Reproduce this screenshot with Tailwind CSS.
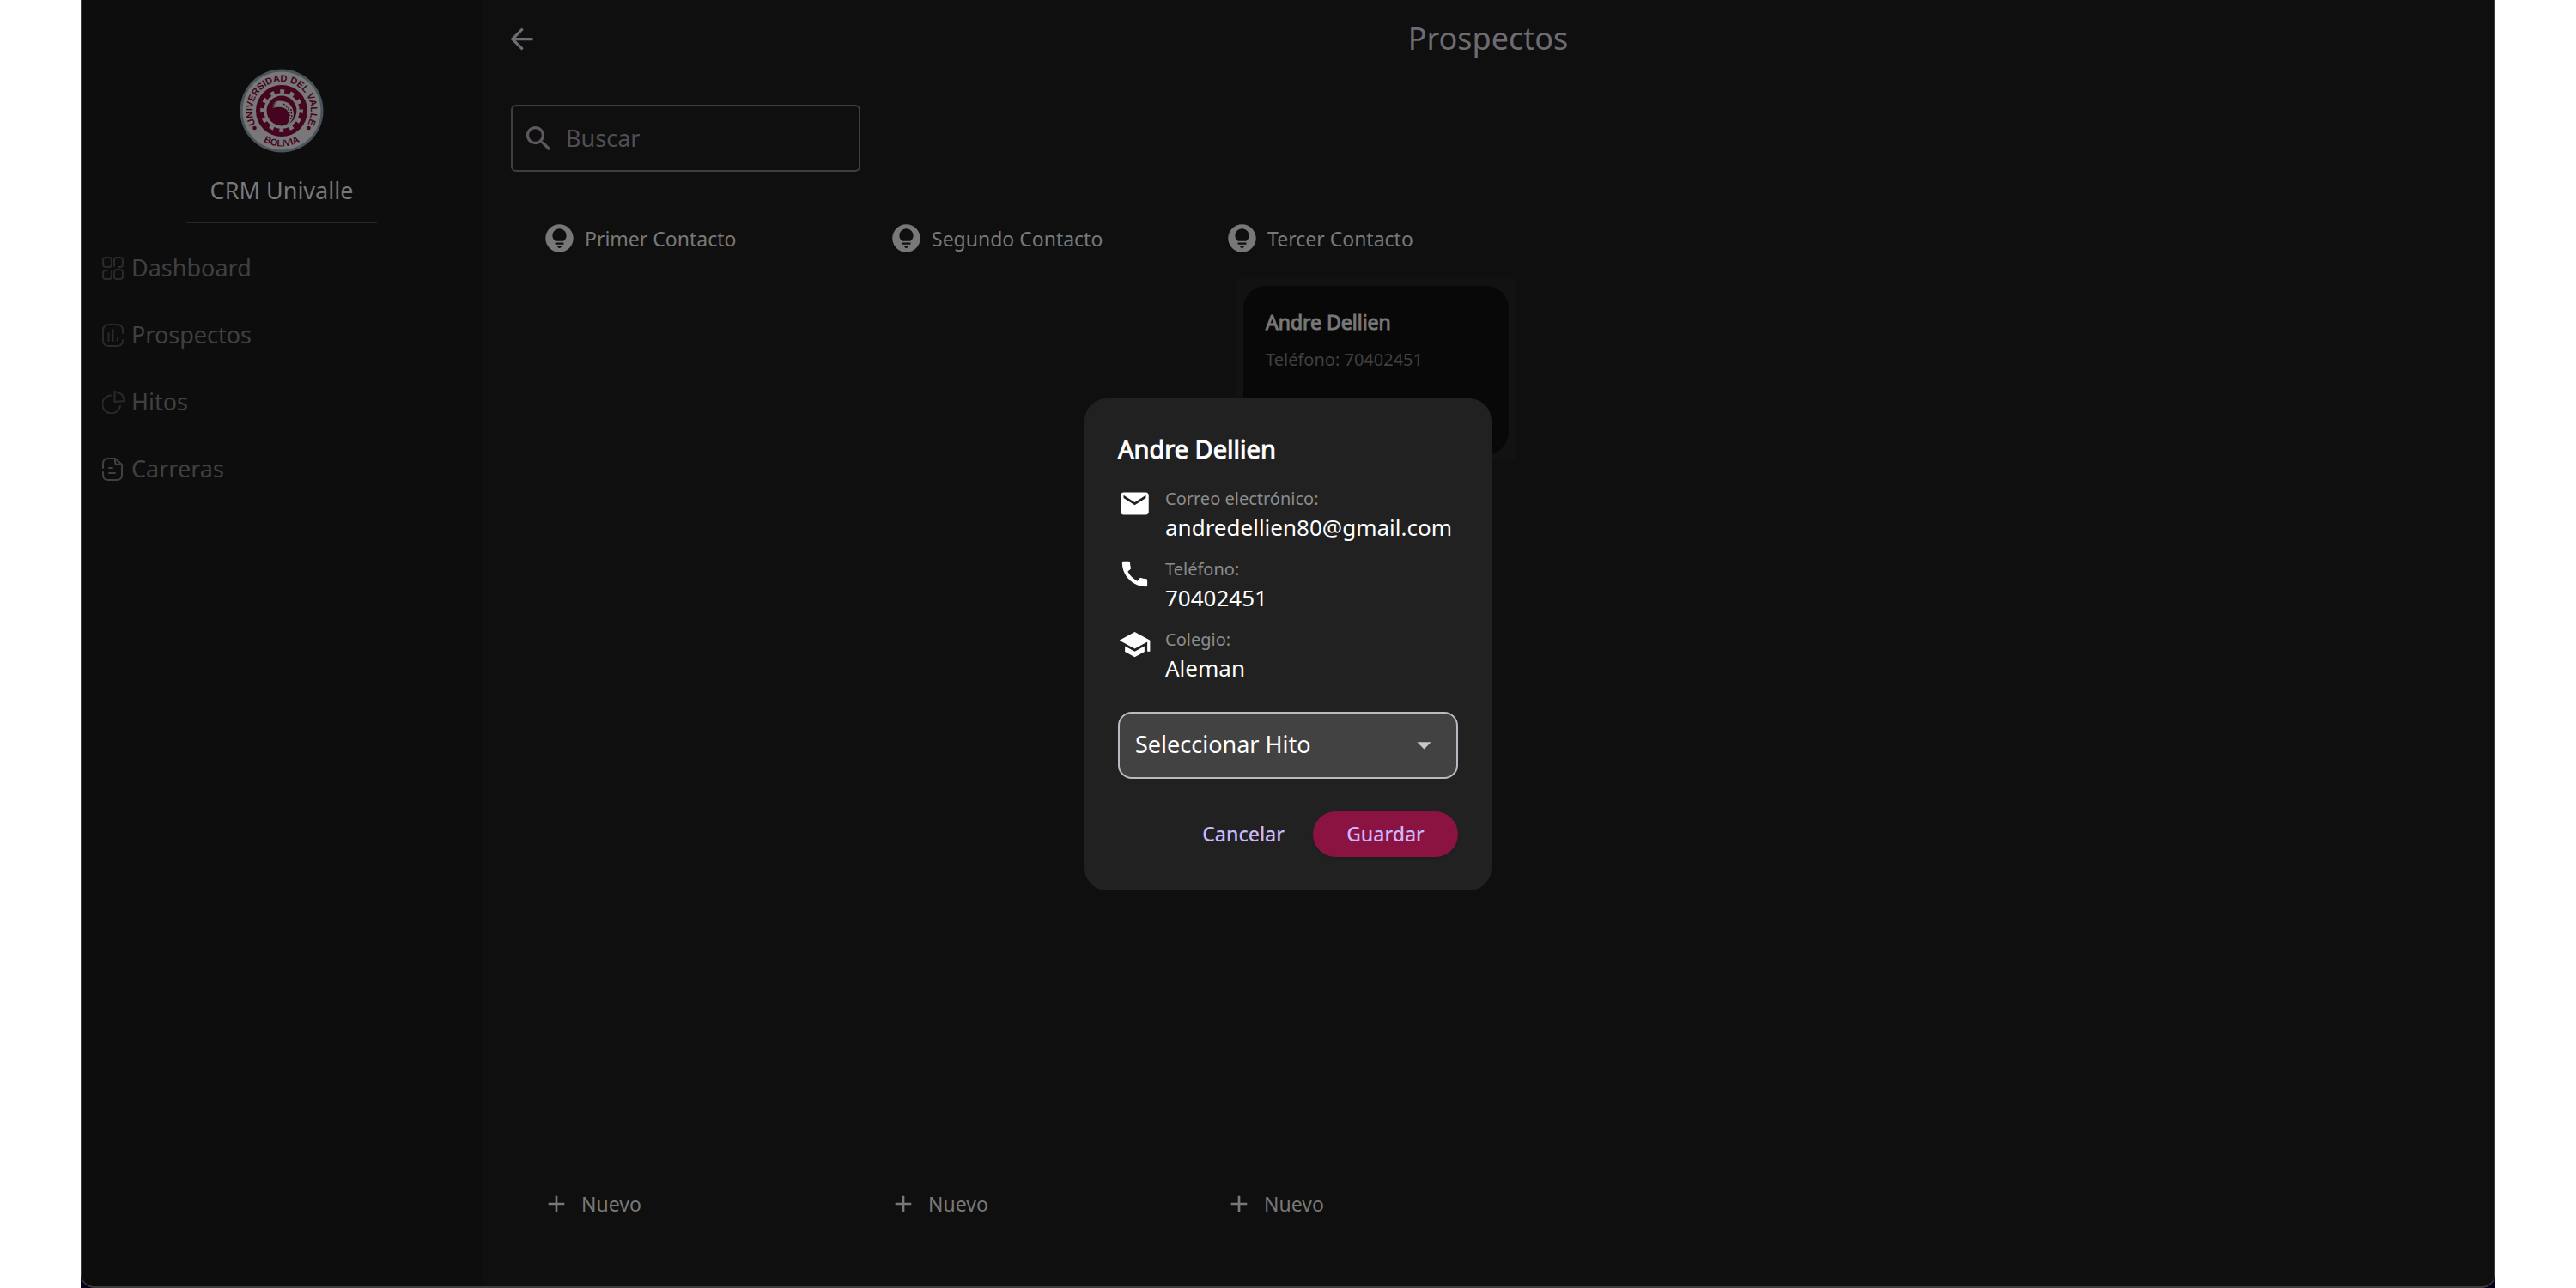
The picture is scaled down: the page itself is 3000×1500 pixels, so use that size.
<!DOCTYPE html>
<html lang="es">
<head>
<meta charset="utf-8">
<title>CRM Univalle - Prospectos</title>
<script src="https://cdn.jsdelivr.net/npm/@tailwindcss/browser@4"></script>
</head>
<body class="bg-white font-['Noto_Sans',sans-serif] px-[94px]">
<div class="bg-[#08001c]">
<div class="flex min-h-screen rounded-b-2xl border-x border-b-2 border-[#3c3c3c] bg-[#0f0f0f]">
  <aside class="flex w-[466px] shrink-0 flex-col bg-[#0d0d0e] rounded-bl-2xl pt-20">
    <div class="flex flex-col items-center">
      <svg class="size-[98px]" viewBox="-49 -49 98 98" role="img" aria-label="Universidad del Valle Bolivia">
        <defs>
          <path id="top" d="M0 34A34 34 0 0 1 0 -34A34 34 0 0 1 0 34"/>
          <path id="bottom" d="M-41.500 0A41.500 41.500 0 0 0 41.500 0"/>
        </defs>
        <circle r="48.5" fill="#4b535b"/>
        <circle r="45.5" fill="#787878"/>
        <circle r="30" fill="#45041f"/>
        <circle r="22.6" fill="none" stroke="#787878" stroke-width="4.5" stroke-dasharray="5 6.833" stroke-dashoffset="2.5"/>
        <circle r="20.8" fill="#787878"/>
        <circle r="17.4" fill="#45041f"/>
        <path d="M-11 -7L-6 -8L-10 -9L-5 -10L-8 -11Q4 -13 10 -7Q16 1 13 9Q11 14 5 17Q10 12 9 5Q7 -3 0 -4Q-5 -5 -11 -3L-7 -6Z" fill="#787878"/>
        <path d="M2 -8L11 -1L12 8L9 11" fill="none" stroke="#45041f" stroke-width="1.5" stroke-dasharray="2 1.5"/>
        <path d="M5 -5L9 1L10 7" fill="none" stroke="#45041f" stroke-width="1" stroke-dasharray="2 1.5"/>
        <circle cx="-31.5" cy="20" r="2.3" fill="#45041f"/>
        <circle cx="31.5" cy="20" r="2.3" fill="#45041f"/>
        <text class="font-['Liberation_Sans'] text-[11px] font-bold" fill="#45041f" text-anchor="middle"><textPath href="#top" startOffset="50%">UNIVERSIDAD DEL VALLE</textPath></text>
        <text class="font-['Liberation_Sans'] text-[11px] font-bold" fill="#45041f" text-anchor="middle"><textPath href="#bottom" startOffset="50%">BOLIVIA</textPath></text>
      </svg>
      <h2 class="mt-[26px] text-[27px] leading-9 text-[#787878]">CRM Univalle</h2>
      <hr class="mt-[19px] w-[222px] border-[#272728]">
    </div>
    <nav class="mt-[13px] flex flex-col pl-6 text-[27px] text-[#404040]">
      <a href="#" class="flex h-[78px] items-center gap-[7px]">
        <svg class="size-[27px] text-[#2a2a2b]" viewBox="0 0 27 27" fill="none" stroke="currentColor" stroke-width="2" stroke-linecap="round"><rect x="1" y="1" width="10" height="11" rx="3"/><path d="M14 11V4a3 3 0 0 1 3-3h4a3 3 0 0 1 3 3v5a3 3 0 0 1-3 3h-2M11 16v7a3 3 0 0 1-3 3H4a3 3 0 0 1-3-3v-4a3 3 0 0 1 3-3h2"/><rect x="14" y="15" width="10" height="11" rx="3"/></svg>
        Dashboard</a>
      <a href="#" class="flex h-[78px] items-center gap-[7px]">
        <svg class="size-[27px] text-[#2a2a2b]" viewBox="0 0 27 27" fill="none" stroke="currentColor" stroke-width="2" stroke-linecap="round"><path d="M24 11V8q0-7-7-7H8Q1 1 1 8v11q0 7 7 7h9q7 0 7-7M7.500 11v9M12.500 7v13M18 16v4"/></svg>
        Prospectos</a>
      <a href="#" class="flex h-[78px] items-center gap-[7px]">
        <svg class="size-[27px] text-[#2a2a2b]" viewBox="0 0 27 27" fill="none" stroke="currentColor" stroke-width="2" stroke-linecap="round" stroke-linejoin="round"><path d="M10 5.500A10.500 10.500 0 1 0 21 18M14.500 1q10 1 11.500 11l-11.500 1z"/></svg>
        Hitos</a>
      <a href="#" class="flex h-[78px] items-center gap-[7px]">
        <svg class="size-[27px] text-[#404040]" viewBox="0 0 27 27" fill="none" stroke="currentColor" stroke-width="2" stroke-linecap="round" stroke-linejoin="round"><path d="M1 12V7q0-6 6-6h8l8 7v12q0 6-6 6H7q-6 0-6-6v-3M15 1v4q0 3 3 3h2M8 12h4M8 18h7"/></svg>
        Carreras</a>
    </nav>
  </aside>

  <main class="flex flex-1 flex-col">
    <header class="grid h-[90px] grid-cols-[39px_1fr_39px] items-center px-[27px]">
      <button type="button" aria-label="Volver" class="size-[39px]"><svg class="size-[39px]" viewBox="0 0 24 24" fill="#6e6b71"><path d="M20 11H7.830l5.590-5.590L12 4l-8 8 8 8 1.410-1.410L7.830 13H20v-2z"/></svg></button>
      <h1 class="text-center text-4xl text-[#6e6b71]">Prospectos</h1>
    </header>

    <label class="ml-[34px] mt-8 flex h-[78px] w-[407px] items-center gap-3 rounded-md border-2 border-[#3f3f40] pl-[11px]">
      <svg class="size-[39px] shrink-0" viewBox="0 0 24 24" fill="#5c585e" aria-hidden="true"><path d="M15.500 14h-.79l-.28-.27C15.410 12.590 16 11.110 16 9.500 16 5.910 13.090 3 9.500 3S3 5.910 3 9.500 5.910 16 9.500 16c1.610 0 3.090-.59 4.230-1.570l.27.28v.79l5 4.990L20.490 19l-4.990-5zm-6 0C7.010 14 5 11.990 5 9.500S7.010 5 9.500 5 14 7.010 14 9.500 11.990 14 9.500 14z"/></svg>
      <input type="text" placeholder="Buscar" aria-label="Buscar" class="w-full min-w-0 bg-transparent text-[27px] text-[#787878] placeholder-[#514d53] outline-none">
    </label>

    <div class="flex flex-1 pl-[71px] pb-20 pt-[58px] text-[23px] leading-8 text-[#787878]">
      <section class="flex w-[404px] flex-col">
        <h3 class="flex h-[39px] items-center gap-[10px]">
          <svg class="size-[39px]" viewBox="0 0 24 24" fill="#787878"><path d="M12 2C6.480 2 2 6.480 2 12s4.480 10 10 10 10-4.480 10-10S17.520 2 12 2zm0 17c-.83 0-1.500-.67-1.500-1.500h3c0 .83-.67 1.500-1.500 1.500zm3-2.500H9V15h6v1.500zm-.03-2.500H9.030C7.800 13.090 7 11.640 7 10c0-2.760 2.240-5 5-5s5 2.240 5 5c0 1.640-.8 3.090-2.030 4z"/></svg>
          Primer Contacto</h3>
        <button type="button" class="mt-auto flex items-center gap-[13px]">
          <svg class="size-8" viewBox="0 0 24 24" fill="#787878"><path d="M19 13h-6v6h-2v-6H5v-2h6V5h2v6h6v2z"/></svg>
          Nuevo</button>
      </section>
      <section class="flex w-[391px] flex-col">
        <h3 class="flex h-[39px] items-center gap-[10px]">
          <svg class="size-[39px]" viewBox="0 0 24 24" fill="#787878"><path d="M12 2C6.480 2 2 6.480 2 12s4.480 10 10 10 10-4.480 10-10S17.520 2 12 2zm0 17c-.83 0-1.500-.67-1.500-1.500h3c0 .83-.67 1.500-1.500 1.500zm3-2.500H9V15h6v1.500zm-.03-2.500H9.030C7.800 13.090 7 11.640 7 10c0-2.760 2.240-5 5-5s5 2.240 5 5c0 1.640-.8 3.090-2.030 4z"/></svg>
          Segundo Contacto</h3>
        <button type="button" class="mt-auto flex items-center gap-[13px]">
          <svg class="size-8" viewBox="0 0 24 24" fill="#787878"><path d="M19 13h-6v6h-2v-6H5v-2h6V5h2v6h6v2z"/></svg>
          Nuevo</button>
      </section>
      <section class="flex flex-col">
        <h3 class="flex h-[39px] items-center gap-[10px]">
          <svg class="size-[39px]" viewBox="0 0 24 24" fill="#787878"><path d="M12 2C6.480 2 2 6.480 2 12s4.480 10 10 10 10-4.480 10-10S17.520 2 12 2zm0 17c-.83 0-1.500-.67-1.500-1.500h3c0 .83-.67 1.500-1.500 1.500zm3-2.500H9V15h6v1.500zm-.03-2.500H9.030C7.800 13.090 7 11.640 7 10c0-2.760 2.240-5 5-5s5 2.240 5 5c0 1.640-.8 3.090-2.030 4z"/></svg>
          Tercer Contacto</h3>
        <div class="ml-[13px] mt-7 bg-[#121212] p-2">
          <article class="h-[196px] w-[309px] rounded-[26px] bg-[#080808] px-[26px] pt-[26px]">
            <h4 class="[-webkit-text-stroke:1px_#787878]">Andre Dellien</h4>
            <p class="mt-3 text-xl leading-8 text-[#404040]">Teléfono: 70402451</p>
          </article>
        </div>
        <button type="button" class="mt-auto flex items-center gap-[13px]">
          <svg class="size-8" viewBox="0 0 24 24" fill="#787878"><path d="M19 13h-6v6h-2v-6H5v-2h6V5h2v6h6v2z"/></svg>
          Nuevo</button>
      </section>
    </div>
  </main>
</div>
</div>

<div class="fixed inset-0 flex items-center justify-center">
  <form role="dialog" aria-labelledby="dialog-title" class="w-[474px] rounded-[26px] bg-[#212121] p-[39px] text-white">
    <h2 id="dialog-title" class="text-[29px] leading-10 [-webkit-text-stroke:1px_white]">Andre Dellien</h2>
    <dl class="mt-6 flex flex-col gap-4">
      <div class="grid grid-cols-[39px_1fr] gap-x-4">
        <svg class="row-span-2 size-[39px]" viewBox="0 0 24 24" fill="white"><path d="M20 4H4c-1.100 0-1.990.9-1.990 2L2 18c0 1.100.9 2 2 2h16c1.100 0 2-.9 2-2V6c0-1.100-.9-2-2-2zm0 4l-8 5-8-5V6l8 5 8-5v2z"/></svg>
        <dt class="text-xl leading-7 text-[#8c8c8c]">Correo electrónico:</dt>
        <dd class="text-[26px] leading-[38px]">andredellien80@gmail.com</dd>
      </div>
      <div class="grid grid-cols-[39px_1fr] gap-x-4">
        <svg class="row-span-2 size-[39px]" viewBox="0 0 24 24" fill="white"><path d="M20.010 15.380c-1.230 0-2.420-.2-3.530-.56-.35-.12-.74-.03-1.010.24l-1.570 1.970c-2.830-1.350-5.480-3.900-6.890-6.830l1.950-1.660c.27-.28.35-.67.24-1.020-.37-1.110-.56-2.300-.56-3.530 0-.54-.45-.99-.99-.99H4.190C3.650 3 3 3.240 3 3.990 3 13.280 10.730 21 20.010 21c.71 0 .99-.63.99-1.180v-3.450c0-.54-.45-.99-.99-.99z"/></svg>
        <dt class="text-xl leading-7 text-[#8c8c8c]">Teléfono:</dt>
        <dd class="text-[26px] leading-[38px]">70402451</dd>
      </div>
      <div class="grid grid-cols-[39px_1fr] gap-x-4">
        <svg class="row-span-2 size-[39px]" viewBox="0 0 24 24" fill="white"><path d="M5 13.180v4L12 21l7-3.820v-4L12 17l-7-3.820zM12 3L1 9l11 6 9-4.910V17h2V9L12 3z"/></svg>
        <dt class="text-xl leading-7 text-[#8c8c8c]">Colegio:</dt>
        <dd class="text-[26px] leading-[38px]">Aleman</dd>
      </div>
    </dl>
    <div class="mt-8 grid items-center">
      <select aria-label="Seleccionar Hito" class="col-start-1 row-start-1 h-[78px] w-full appearance-none rounded-2xl border-2 border-[#bdb8c2] bg-[#424242] pl-[18px] text-[27px]"><option>Seleccionar Hito</option></select>
      <svg class="pointer-events-none col-start-1 row-start-1 mr-5 size-[39px] justify-self-end" viewBox="0 0 24 24" fill="#c8c8c8"><path d="M7 10l5 5 5-5z"/></svg>
    </div>
    <div class="mt-[38px] flex items-center justify-end gap-[33px] text-[23px] font-medium text-[#cbb8fc]">
      <button type="button">Cancelar</button>
      <button type="submit" class="h-[53px] w-[169px] rounded-full bg-[#8b1342] shadow">Guardar</button>
    </div>
  </form>
</div>
</body>
</html>
